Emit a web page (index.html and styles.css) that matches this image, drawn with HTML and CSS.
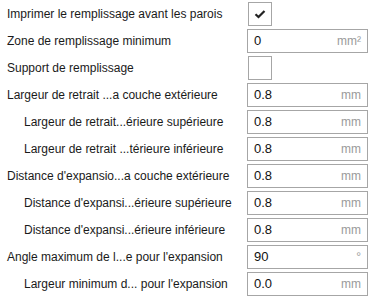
FILE: index.html
```html
<!DOCTYPE html>
<html lang="fr">
<head>
    <meta charset="UTF-8">
    <title>Paramètres de remplissage</title>
    <link rel="stylesheet" href="styles.css">
</head>
<body>
    <div class="settings">
        <div class="row">
            <span class="label">Imprimer le remplissage avant les parois</span>
            <div class="check">
                <svg width="12" height="10" viewBox="0 0 12 10"><path d="M1.5 5.2 L4.5 8 L10.5 2" fill="none" stroke="#222" stroke-width="2.2"/></svg>
            </div>
        </div>
        <div class="row">
            <span class="label">Zone de remplissage minimum</span>
            <div class="field"><span class="value">0</span><span class="unit">mm²</span></div>
        </div>
        <div class="row">
            <span class="label">Support de remplissage</span>
            <div class="check"></div>
        </div>
        <div class="row">
            <span class="label">Largeur de retrait ...a couche extérieure</span>
            <div class="field"><span class="value">0.8</span><span class="unit">mm</span></div>
        </div>
        <div class="row sub">
            <span class="label">Largeur de retrait...érieure supérieure</span>
            <div class="field"><span class="value">0.8</span><span class="unit">mm</span></div>
        </div>
        <div class="row sub">
            <span class="label">Largeur de retrait ...térieure inférieure</span>
            <div class="field"><span class="value">0.8</span><span class="unit">mm</span></div>
        </div>
        <div class="row">
            <span class="label">Distance d'expansio...a couche extérieure</span>
            <div class="field"><span class="value">0.8</span><span class="unit">mm</span></div>
        </div>
        <div class="row sub">
            <span class="label">Distance d'expansi...érieure supérieure</span>
            <div class="field"><span class="value">0.8</span><span class="unit">mm</span></div>
        </div>
        <div class="row sub">
            <span class="label">Distance d'expansi...érieure inférieure</span>
            <div class="field"><span class="value">0.8</span><span class="unit">mm</span></div>
        </div>
        <div class="row">
            <span class="label">Angle maximum de l...e pour l'expansion</span>
            <div class="field"><span class="value">90</span><span class="unit">°</span></div>
        </div>
        <div class="row sub">
            <span class="label">Largeur minimum d... pour l'expansion</span>
            <div class="field"><span class="value">0.0</span><span class="unit">mm</span></div>
        </div>
    </div>
</body>
</html>
```

FILE: styles.css
```css
body {
    margin: 0;
    background: #ffffff;
    font-family: "Liberation Sans", Arial, sans-serif;
    font-size: 12px;
    color: #1a1a1a;
}

.settings {
    width: 371px;
}

.row {
    display: flex;
    align-items: center;
    height: 27px;
    padding-left: 7px;
}

.row.sub {
    padding-left: 24px;
}

.label {
    flex: 1;
    white-space: nowrap;
}

.check {
    width: 22px;
    height: 22px;
    margin-right: 99px;
    border: 1px solid #a6a6a6;
    display: flex;
    align-items: center;
    justify-content: center;
}

.field {
    width: 107px;
    height: 22px;
    margin-right: 3px;
    padding: 0 6px;
    border: 1px solid #a6a6a6;
    display: flex;
    align-items: center;
    justify-content: space-between;
}

.value {
    font-size: 13px;
    color: #111;
}

.unit {
    color: #9a9a9a;
}
```
